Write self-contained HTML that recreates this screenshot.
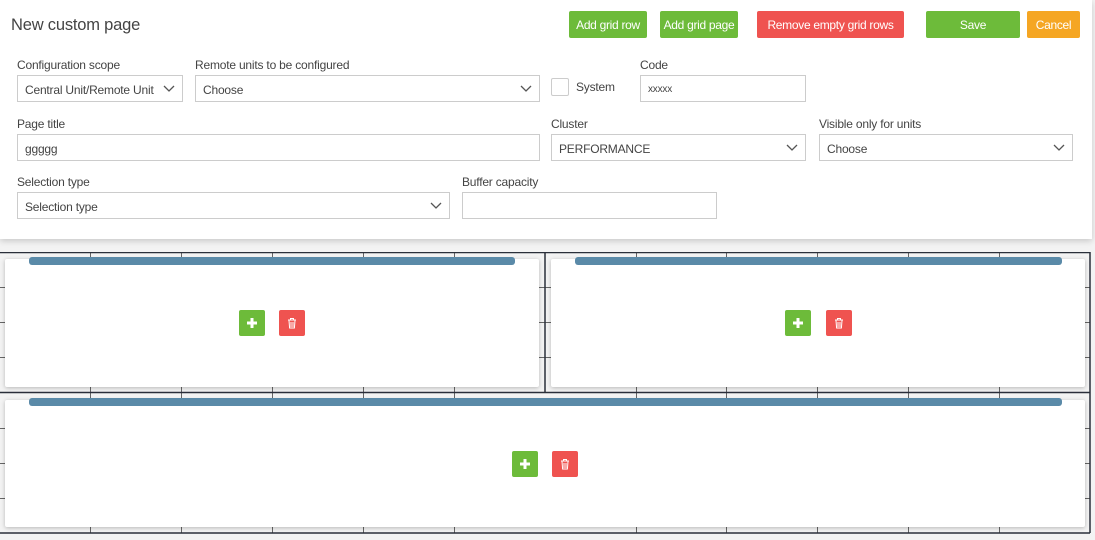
<!DOCTYPE html>
<html><head><style>
*{box-sizing:border-box;margin:0;padding:0}
body{width:1095px;height:540px;background:#f3f3f3;font-family:"Liberation Sans",sans-serif;position:relative;overflow:hidden;color:#444}
.a{position:absolute}
#top{left:0;top:0;width:1092px;height:239px;background:#fff;box-shadow:0 2px 6px rgba(0,0,0,.18)}
.btn{position:absolute;top:11px;height:27px;color:#fff;font-size:12px;letter-spacing:-0.3px;line-height:28px;text-align:center;border-radius:2px}
.g{background:#6dbb3a}.r{background:#ef5350}.o{background:#f5a623}
.lbl{position:absolute;font-size:12px;letter-spacing:-0.2px;color:#444}
.in{position:absolute;height:27px;border:1px solid #ccc;background:#fff;font-size:12px;letter-spacing:-0.2px;line-height:28px;padding-left:7px;color:#444}
.in svg{position:absolute;right:7px;top:9px}
.card{position:absolute;background:#fff;border-radius:2px;box-shadow:0 1px 4px rgba(0,0,0,.25)}
.bar{position:absolute;height:8px;background:#5a8aa8;border-radius:3px}
.ib{position:absolute;width:26px;height:26px;border-radius:2px}
</style></head><body>
<div id="top" class="a">
<div class="a" style="left:11px;top:16px;font-size:16.5px;color:#444;letter-spacing:-0.2px">New custom page</div>
<div class="btn g" style="left:569px;width:78px">Add grid row</div>
<div class="btn g" style="left:660px;width:78px">Add grid page</div>
<div class="btn r" style="left:757px;width:147px">Remove empty grid rows</div>
<div class="btn g" style="left:926px;width:94px">Save</div>
<div class="btn o" style="left:1027px;width:53px">Cancel</div>

<div class="lbl" style="left:17px;top:58px">Configuration scope</div>
<div class="in" style="left:17px;top:75px;width:166px">Central Unit/Remote Unit<svg width="12" height="8"><path d="M1 1l5 5 5-5" stroke="#555" fill="none" stroke-width="1.3"/></svg></div>
<div class="lbl" style="left:195px;top:58px">Remote units to be configured</div>
<div class="in" style="left:195px;top:75px;width:345px">Choose<svg width="12" height="8"><path d="M1 1l5 5 5-5" stroke="#555" fill="none" stroke-width="1.3"/></svg></div>
<div class="a" style="left:551px;top:78px;width:18px;height:18px;border:1px solid #ccc;border-radius:2px"></div>
<div class="lbl" style="left:576px;top:80px">System</div>
<div class="lbl" style="left:640px;top:58px">Code</div>
<div class="in" style="left:640px;top:75px;width:166px;font-size:10px">xxxxx</div>

<div class="lbl" style="left:17px;top:117px">Page title</div>
<div class="in" style="left:17px;top:134px;width:523px">ggggg</div>
<div class="lbl" style="left:551px;top:117px">Cluster</div>
<div class="in" style="left:551px;top:134px;width:255px">PERFORMANCE<svg width="12" height="8"><path d="M1 1l5 5 5-5" stroke="#555" fill="none" stroke-width="1.3"/></svg></div>
<div class="lbl" style="left:819px;top:117px">Visible only for units</div>
<div class="in" style="left:819px;top:134px;width:254px">Choose<svg width="12" height="8"><path d="M1 1l5 5 5-5" stroke="#555" fill="none" stroke-width="1.3"/></svg></div>

<div class="lbl" style="left:17px;top:175px">Selection type</div>
<div class="in" style="left:17px;top:192px;width:433px">Selection type<svg width="12" height="8"><path d="M1 1l5 5 5-5" stroke="#555" fill="none" stroke-width="1.3"/></svg></div>
<div class="lbl" style="left:462px;top:175px">Buffer capacity</div>
<div class="in" style="left:462px;top:192px;width:255px"></div>
</div>

<svg class="a" style="left:0;top:252px" width="1095" height="288">
<g stroke="#666" stroke-width="1">
<line x1="0" y1="35.5" x2="1090" y2="35.5"/><line x1="0" y1="70.5" x2="1090" y2="70.5"/><line x1="0" y1="105.5" x2="1090" y2="105.5"/>
<line x1="0" y1="176.5" x2="1090" y2="176.5"/><line x1="0" y1="211.5" x2="1090" y2="211.5"/><line x1="0" y1="246.5" x2="1090" y2="246.5"/>
<line x1="90.5" y1="0" x2="90.5" y2="281"/><line x1="181.5" y1="0" x2="181.5" y2="281"/><line x1="272.5" y1="0" x2="272.5" y2="281"/><line x1="363.5" y1="0" x2="363.5" y2="281"/><line x1="454.5" y1="0" x2="454.5" y2="281"/><line x1="636.5" y1="0" x2="636.5" y2="281"/><line x1="726.5" y1="0" x2="726.5" y2="281"/><line x1="817.5" y1="0" x2="817.5" y2="281"/><line x1="908.5" y1="0" x2="908.5" y2="281"/><line x1="999.5" y1="0" x2="999.5" y2="281"/>
</g>
<g stroke="#2a2f3a" stroke-width="1.5" fill="none">
<line x1="0" y1="0.5" x2="1090" y2="0.5"/><line x1="1090" y1="0" x2="1090" y2="281"/><line x1="0" y1="281" x2="1090" y2="281"/><line x1="0" y1="140.5" x2="1090" y2="140.5"/><line x1="545" y1="0" x2="545" y2="140"/>
</g>
</svg>

<div class="card" style="left:5px;top:259px;width:534px;height:128px"></div>
<div class="bar" style="left:29px;top:257px;width:486px"></div>
<div class="card" style="left:551px;top:259px;width:534px;height:128px"></div>
<div class="bar" style="left:575px;top:257px;width:487px"></div>
<div class="card" style="left:5px;top:400px;width:1080px;height:127px"></div>
<div class="bar" style="left:29px;top:398px;width:1033px"></div>

<div class="ib g" style="left:239px;top:310px"><svg width="26" height="26"><path d="M13 8v10M8 13h10" stroke="#fff" stroke-width="3"/></svg></div>
<div class="ib r" style="left:279px;top:310px"><svg width="26" height="26"><path d="M9 10h8M11.5 10V8.5h3V10M10 10.5l.6 7.5h4.8l.6-7.5M12 12v5M14 12v5" stroke="#fff" fill="none" stroke-width="1"/></svg></div>
<div class="ib g" style="left:785px;top:310px"><svg width="26" height="26"><path d="M13 8v10M8 13h10" stroke="#fff" stroke-width="3"/></svg></div>
<div class="ib r" style="left:826px;top:310px"><svg width="26" height="26"><path d="M9 10h8M11.5 10V8.5h3V10M10 10.5l.6 7.5h4.8l.6-7.5M12 12v5M14 12v5" stroke="#fff" fill="none" stroke-width="1"/></svg></div>
<div class="ib g" style="left:512px;top:451px"><svg width="26" height="26"><path d="M13 8v10M8 13h10" stroke="#fff" stroke-width="3"/></svg></div>
<div class="ib r" style="left:552px;top:451px"><svg width="26" height="26"><path d="M9 10h8M11.5 10V8.5h3V10M10 10.5l.6 7.5h4.8l.6-7.5M12 12v5M14 12v5" stroke="#fff" fill="none" stroke-width="1"/></svg></div>
</body></html>
